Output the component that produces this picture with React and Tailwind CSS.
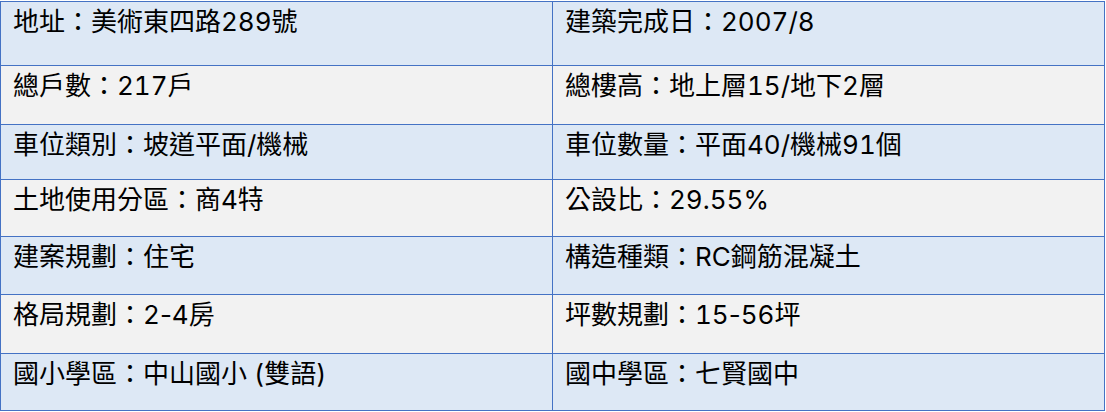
const ROWS = [
  { h: 'h-[64px]', bg: 'bg-[#dde8f5]', left: '地址：美術東四路289號', right: '建築完成日：2007/8' },
  { h: 'h-[59px]', bg: 'bg-[#f2f2f2]', left: '總戶數：217戶', right: '總樓高：地上層15/地下2層' },
  { h: 'h-[55px]', bg: 'bg-[#dde8f5]', left: '車位類別：坡道平面/機械', right: '車位數量：平面40/機械91個' },
  { h: 'h-[57px]', bg: 'bg-[#f2f2f2]', left: '土地使用分區：商4特', right: '公設比：29.55%' },
  { h: 'h-[58px]', bg: 'bg-[#dde8f5]', left: '建案規劃：住宅', right: '構造種類：RC鋼筋混凝土' },
  { h: 'h-[59px]', bg: 'bg-[#f2f2f2]', left: '格局規劃：2-4房', right: '坪數規劃：15-56坪' },
  { h: 'h-[57px]', bg: 'bg-[#dde8f5]', left: '國小學區：中山國小 (雙語)', right: '國中學區：七賢國中' },
];

// tabular digits, but keep the hyphen narrow
function Text({ value }) {
  const parts = value.split('-');
  return parts.map((p, i) => (
    <span key={i}>
      {i > 0 && <span className="normal-nums">-</span>}
      {p}
    </span>
  ));
}

function Cell({ value, className }) {
  return (
    <div className={`border-r border-b border-[#4472c4] pl-[12px] pt-[5px] leading-[30px] ${className}`}>
      <Text value={value} />
    </div>
  );
}

export default function App() {
  return (
    <div className="h-[412px] w-[1106px] bg-white pt-px">
      <div
        className="w-[1105px] border-l border-t border-[#4472c4] text-[26px] text-black tabular-nums"
        style={{ fontFamily: 'Inter, "Noto Sans CJK TC", sans-serif' }}
      >
        {ROWS.map((r, i) => (
          <div key={i} className={`flex ${r.h} ${r.bg}`}>
            <Cell value={r.left} className="w-[552px]" />
            <Cell value={r.right} className="flex-1" />
          </div>
        ))}
      </div>
    </div>
  );
}
